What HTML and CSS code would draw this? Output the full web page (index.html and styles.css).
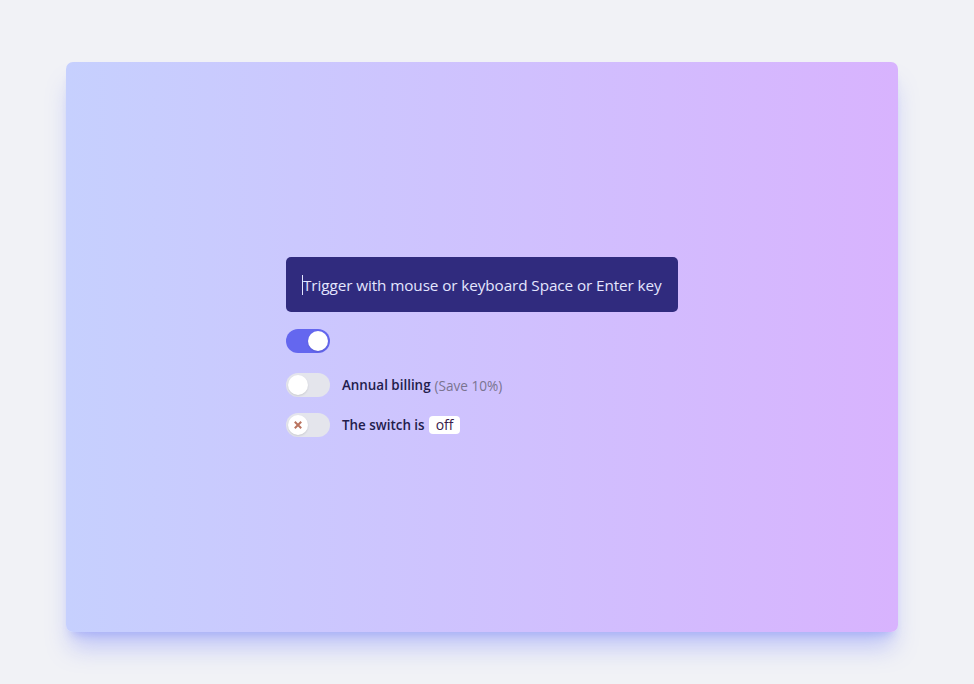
FILE: index.html
```html
<!DOCTYPE html>
<html>
<head>
<meta charset="utf-8">
<link rel="stylesheet" href="styles.css">
</head>
<body>
<div class="page">
  <div class="card">
    <div class="stack">
      <div class="trigger"><span class="caret"></span>Trigger with mouse or keyboard Space or Enter key</div>
      <div class="row first">
        <span class="switch on"><span class="knob"></span></span>
      </div>
      <div class="row second">
        <span class="switch"><span class="knob"></span></span>
        <span class="label">Annual billing <span class="muted">(Save 10%)</span></span>
      </div>
      <div class="row third">
        <span class="switch"><span class="knob"><svg width="8" height="8" viewBox="0 0 8 8"><path d="M1.5 1.5 L6.5 6.5 M6.5 1.5 L1.5 6.5" stroke="#b9735f" stroke-width="2" stroke-linecap="square"/></svg></span></span>
        <span class="label">The switch is <span class="badge">off</span></span>
      </div>
    </div>
  </div>
</div>
</body>
</html>
```
FILE: styles.css
```css
html, body { margin: 0; padding: 0; }
body {
  background: #f1f2f6;
  font-family: "Open Sans", "Noto Sans", sans-serif;
  width: 974px;
  height: 684px;
  overflow: hidden;
}
.page {
  padding: 62px 76px 0 66px;
}
.card {
  width: 832px;
  height: 570px;
  border-radius: 7px;
  background: linear-gradient(to right, #c6d0fe, #d8b3fe);
  box-shadow: 0 20px 25px -5px rgba(129, 140, 248, 0.45), 0 8px 10px -6px rgba(129, 140, 248, 0.45);
  display: flex;
  align-items: center;
  justify-content: center;
}
.stack {
  width: 392px;
  display: flex;
  flex-direction: column;
  align-items: flex-start;
}
.trigger {
  box-sizing: border-box;
  width: 392px;
  height: 55px;
  background: #302b7e;
  color: #e4e6ff;
  border-radius: 5px;
  display: flex;
  align-items: center;
  padding-left: 16px;
  padding-top: 1px;
  font-size: 15.3px;
  letter-spacing: -0.1px;
  white-space: nowrap;
}
.caret {
  display: inline-block;
  width: 1px;
  height: 20px;
  background: #e4e6ff;
}
.row {
  display: flex;
  align-items: center;
  gap: 12px;
}
.row.first { margin-top: 17px; }
.row.second { margin-top: 20px; }
.row.third { margin-top: 16px; }
.switch {
  box-sizing: border-box;
  width: 44px;
  height: 24px;
  border-radius: 12px;
  background: #e4e5ec;
  padding: 2px;
  display: flex;
  align-items: center;
}
.switch.on {
  background: #6467ef;
  justify-content: flex-end;
}
.knob {
  width: 20px;
  height: 20px;
  border-radius: 50%;
  background: #fff;
  box-shadow: 0 1px 2px rgba(0,0,0,0.12);
  display: flex;
  align-items: center;
  justify-content: center;
}
.label {
  font-size: 13.4px;
  font-weight: 600;
  color: #231c4c;
  display: flex;
  align-items: center;
  gap: 4px;
}
.muted {
  font-weight: 400;
  font-size: 13.6px;
  color: #7a7490;
}
.badge {
  background: #fff;
  border-radius: 4px;
  padding: 0 7px;
  height: 18px;
  line-height: 18px;
  font-size: 14px;
  font-weight: 400;
  color: #3a1b4a;
}
```
